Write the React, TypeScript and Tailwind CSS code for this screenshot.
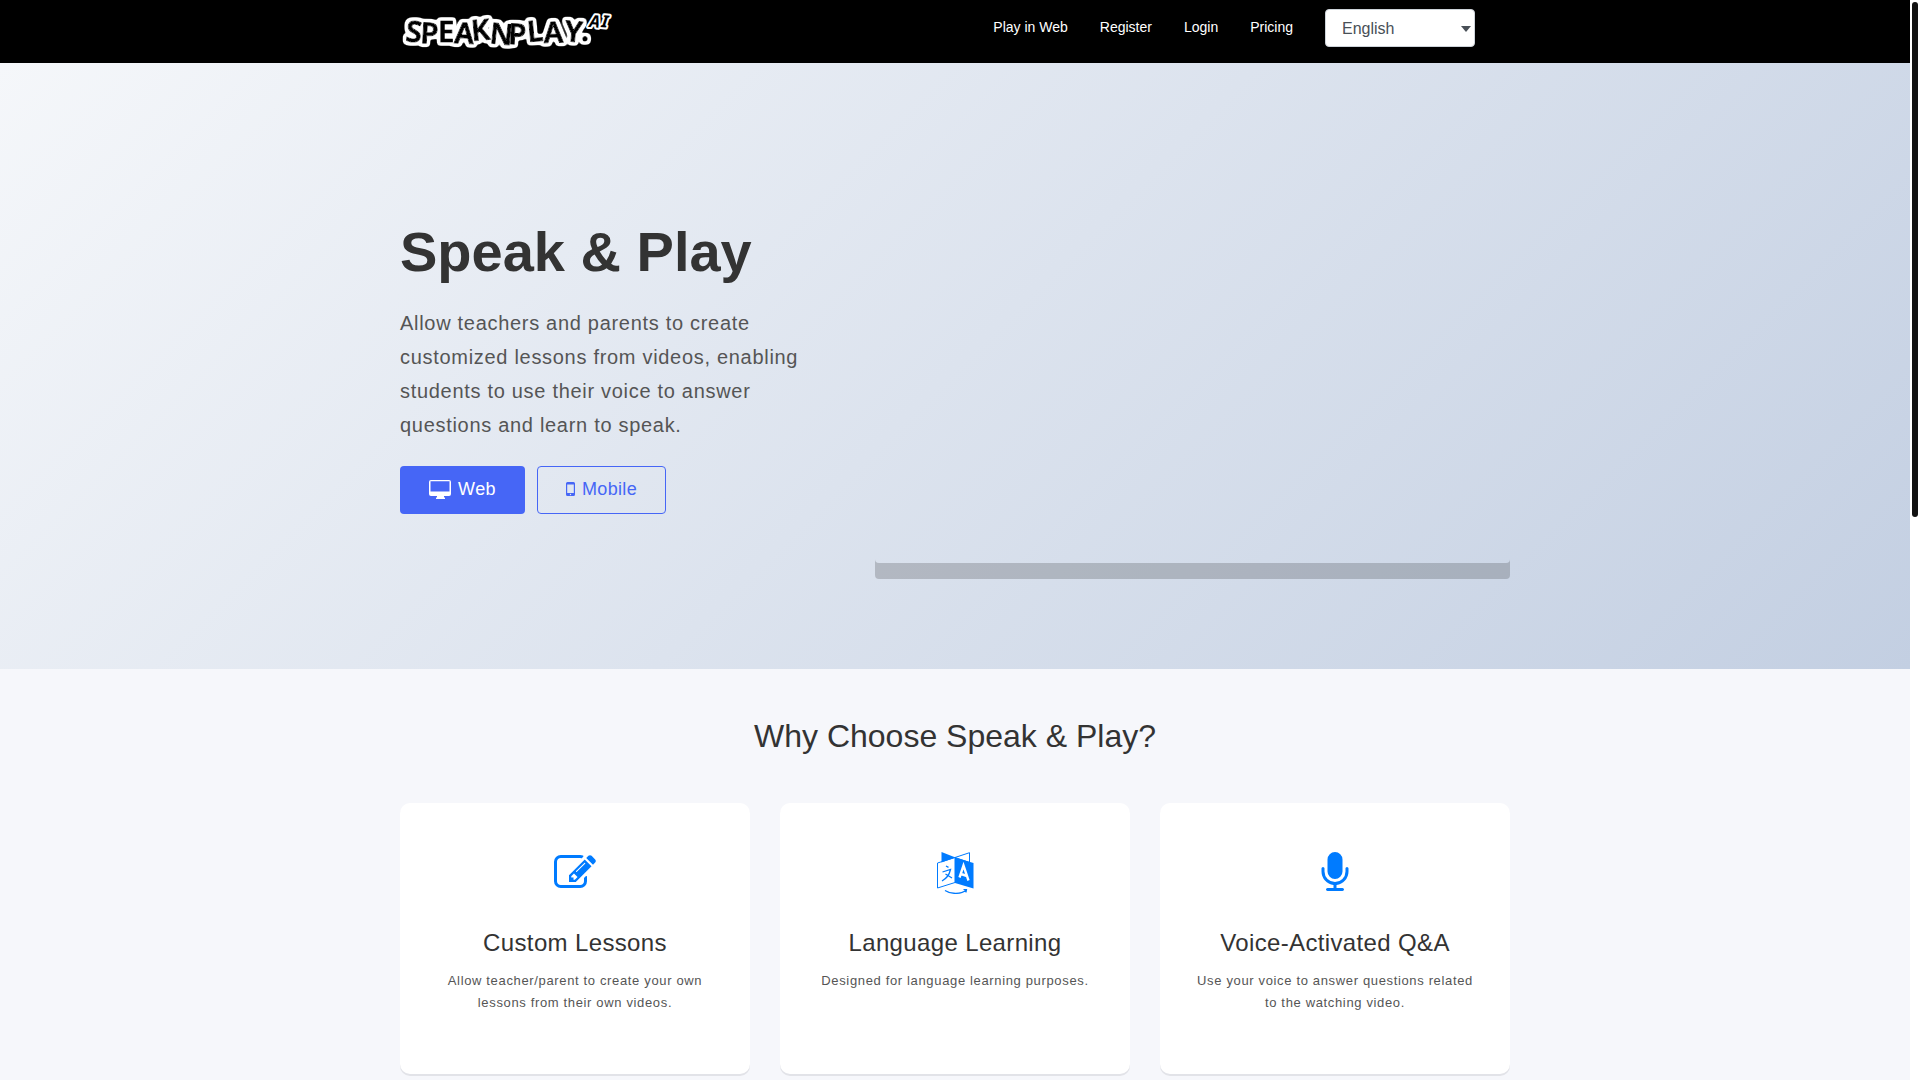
import * as React from 'react';

interface Feature {
  title: string;
  description: string;
  icon: React.ReactNode;
}

const NAV_LINKS = ['Play in Web', 'Register', 'Login', 'Pricing'];

const LANGUAGES = ['English', 'Español', 'Français', '中文'];

const Logo = () => {
  return (
    <svg viewBox="0 0 220 48" className="w-[220px] h-[48px]" role="img" aria-label="SpeakNPlay.AI">
      {/* 文字の外側に丸みのある白フチをつける */}
      <filter id="logo-outline" x="-10%" y="-30%" width="120%" height="160%">
        <feMorphology in="SourceAlpha" operator="dilate" radius="2" />
        <feGaussianBlur stdDeviation="1.5" />
        <feComponentTransfer result="outline">
          <feFuncR type="linear" slope="0" intercept="1" />
          <feFuncG type="linear" slope="0" intercept="1" />
          <feFuncB type="linear" slope="0" intercept="1" />
          <feFuncA type="linear" slope="5" intercept="-0.5" />
        </feComponentTransfer>
        <feMerge>
          <feMergeNode in="outline" />
          <feMergeNode in="SourceGraphic" />
        </feMerge>
      </filter>
      <g
        fill="#000"
        stroke="#000"
        strokeLinejoin="round"
        fontFamily="'Liberation Sans Narrow', 'Noto Sans', sans-serif"
        fontWeight="600"
        filter="url(#logo-outline)"
      >
        <text
          fontSize="29"
          strokeWidth="1"
          x="5 20 38 54 72 89 108 128 144 164 181"
          y="36 38 37 38 36 38 39 37 38 36 36"
          rotate="6 3 0 3 -5 6 2 -5 -2 5 0"
        >
          SPEAKNPLAY.
        </text>
      </g>
      <g
        fill="#000"
        stroke="#fff"
        strokeLinejoin="round"
        paintOrder="stroke"
        fontFamily="'Noto Sans', sans-serif"
        fontWeight="bold"
        fontStyle="italic"
      >
        <text fontSize="17" strokeWidth="4" x="189 201" y="22 22" rotate="4 6">AI</text>
      </g>
    </svg>
  );
};

const DesktopIcon = () => {
  return (
    <svg viewBox="0 0 22 19" className="w-[22px] h-[19px]" fill="currentColor" aria-hidden="true">
      <path
        fillRule="evenodd"
        d="M2 0h18a2 2 0 0 1 2 2v12a2 2 0 0 1-2 2h-5v1l1 1v1H7v-1l1-1v-1H2a2 2 0 0 1-2-2V2a2 2 0 0 1 2-2zm-.5 1.200v10.300h19V1.200z"
      />
    </svg>
  );
};

const PhoneIcon = () => {
  return (
    <svg viewBox="0 0 9 14" className="w-[9px] h-[14px]" fill="currentColor" aria-hidden="true">
      <path
        fillRule="evenodd"
        d="M1.500 0h6A1.500 1.500 0 0 1 9 1.500v11A1.500 1.500 0 0 1 7.500 14h-6A1.500 1.500 0 0 1 0 12.500v-11A1.500 1.500 0 0 1 1.500 0zM1.200 2.600v8.400h6.600V2.600zM4.500 11.800a.7.7 0 1 0 0 1.400.7.7 0 0 0 0-1.400z"
      />
    </svg>
  );
};

const EditIcon = () => {
  return (
    <svg viewBox="0 0 1792 1792" className="w-[42px] h-[42px]" fill="currentColor" aria-hidden="true">
      <path d="M888 1184l116-116-152-152-116 116v56h96v96h56zm440-720q-16-16-33 1l-350 350q-17 17-1 33t33-1l350-350q17-17 1-33zm80 594v190q0 119-84.500 203.500t-203.500 84.500h-832q-119 0-203.500-84.500t-84.500-203.500v-832q0-119 84.500-203.500t203.500-84.500h832q63 0 117 25 15 7 18 23 3 17-9 29l-49 49q-14 14-32 8-23-6-45-6h-832q-66 0-113 47t-47 113v832q0 66 47 113t113 47h832q66 0 113-47t47-113v-126q0-13 9-22l64-64q15-15 35-7t20 29zm-96-738l288 288-672 672h-288v-288zm444 132l-92 92-288-288 92-92q28-28 68-28t68 28l152 152q28 28 28 68t-28 68z" />
    </svg>
  );
};

const LanguageIcon = () => {
  return (
    <svg viewBox="0 0 42 42" className="w-[42px] h-[42px]" fill="none" stroke="currentColor" strokeWidth="1" aria-hidden="true">
      {/* 奥のページ */}
      <path d="M7.500 0l14 5.500-14 5z" fill="currentColor" stroke="none" />
      <path d="M21 5.500L35.500 .7v10.500M21 5.500l14.500 5" />
      {/* 手前のページ */}
      <path d="M3.500 11L21 5.500v25L3.500 36z" />
      <path d="M21 5.500l18.500 5.500v25.500L21 31z" fill="currentColor" stroke="none" />
      <path d="M12 14l2.500 1.300M8.500 20l8-2.500c-1 4.500-4 9-8.500 11.500M11.500 22l6.500 4" strokeWidth="1.300" />
      <path d="M25.500 25.500l4-12 5 15M27 22l6 2" stroke="#fff" strokeWidth="2.400" />
      <path d="M11 38.500c6 4 16 4 21-.5M29.500 37.500l3 0-.5 3" strokeWidth="1.200" />
    </svg>
  );
};

const MicrophoneIcon = () => {
  return (
    <svg viewBox="0 0 1792 1792" className="w-[42px] h-[42px]" fill="currentColor" aria-hidden="true">
      <path d="M1472 704v128q0 221-147.500 384.500t-364.500 187.500v132h256q26 0 45 19t19 45-19 45-45 19h-640q-26 0-45-19t-19-45 19-45 45-19h256v-132q-217-24-364.500-187.500t-147.500-384.500v-128q0-26 19-45t45-19 45 19 19 45v128q0 185 131.500 316.500t316.500 131.500 316.500-131.500 131.500-316.500v-128q0-26 19-45t45-19 45 19 19 45zm-256-384v512q0 132-94 226t-226 94-226-94-94-226v-512q0-132 94-226t226-94 226 94 94 226z" />
    </svg>
  );
};

const FEATURES: Feature[] = [
  {
    title: 'Custom Lessons',
    description: 'Allow teacher/parent to create your own lessons from their own videos.',
    icon: <EditIcon />,
  },
  {
    title: 'Language Learning',
    description: 'Designed for language learning purposes.',
    icon: <LanguageIcon />,
  },
  {
    title: 'Voice-Activated Q&A',
    description: 'Use your voice to answer questions related to the watching video.',
    icon: <MicrophoneIcon />,
  },
];

const Container = ({ children, className }: {
  children?: React.ReactNode
  className?: string
}) => {
  return (
    <div className={`w-full max-w-[1140px] mx-auto px-[15px] ${className ?? ''}`}>
      {children}
    </div>
  );
};

const Header = () => {
  const [language, setLanguage] = React.useState(LANGUAGES[0]);

  return (
    <header className="bg-black">
      <Container className="flex items-start justify-between h-[63px] pt-[9px]">
        <a href="#" className="-mt-1"><Logo /></a>
        <nav className="flex items-center gap-8 pr-[35px]">
          {NAV_LINKS.map(label => (
            <a key={label} href="#" className="text-sm leading-5 pb-0.5 text-white">{label}</a>
          ))}
          <div className="relative">
            <select
              aria-label="Language"
              value={language}
              onChange={e => setLanguage(e.target.value)}
              className="block appearance-none w-[150px] h-[38px] pt-0.5 pl-4 pr-6 rounded border border-[#ced4da] bg-white text-base text-[#495057]"
            >
              {LANGUAGES.map(x => <option key={x} value={x}>{x}</option>)}
            </select>
            <svg viewBox="0 0 10 6" className="absolute right-1 top-[17px] w-[10px] h-[6px] pointer-events-none" fill="#495057">
              <path d="M0 0h10L5 6z" />
            </svg>
          </div>
        </nav>
      </Container>
    </header>
  );
};

const Hero = () => {
  return (
    <section className="bg-linear-[135deg,#f5f7fa_0%,#c3cfe2_100%] pt-[143px] pb-[106px]">
      <Container className="grid grid-cols-12 gap-[30px]">
        <div className="col-span-5 pt-3">
          <h1 className="text-[56px] leading-[68px] font-bold text-[#333]">Speak &amp; Play</h1>
          <p className="mt-5 text-xl leading-[34px] tracking-[0.035em] text-[#555]">
            Allow teachers and parents to create customized lessons from videos, enabling students to use their voice to answer questions and learn to speak.
          </p>
          <div className="flex gap-3 mt-6">
            <button type="button" className="flex items-center justify-center gap-[7px] w-[125px] h-12 pb-0.5 rounded bg-[#4666f6] text-lg tracking-[0.02em] text-white">
              <DesktopIcon />Web
            </button>
            <button type="button" className="flex items-center justify-center gap-[7px] w-[129px] h-12 pb-0.5 rounded border border-[#4666f6] text-lg tracking-[0.02em] text-[#4666f6]">
              <PhoneIcon />Mobile
            </button>
          </div>
        </div>
        <div className="col-span-7 aspect-video rounded shadow-[0_16px_0_rgba(0,0,0,0.18)]"></div>
      </Container>
    </section>
  );
};

const FeatureCard = ({ feature }: { feature: Feature }) => {
  return (
    <article className="flex flex-col items-center h-[271px] px-[30px] pt-[49px] rounded-[10px] bg-white text-center shadow-[0_2px_0_#e2e3e8]">
      <div className="text-[#007bff]">{feature.icon}</div>
      <h3 className="mt-[33px] text-2xl leading-8 tracking-[0.015em] text-[#333]">{feature.title}</h3>
      <p className="mt-[11px] text-[13px] leading-[22px] tracking-wider text-[#555]">{feature.description}</p>
    </article>
  );
};

const Features = () => {
  return (
    <section className="pt-12">
      <Container>
        <h2 className="text-[32px] leading-[38px] text-center text-[#333]">Why Choose Speak &amp; Play?</h2>
        <div className="grid grid-cols-3 gap-[30px] mt-12">
          {FEATURES.map(x => <FeatureCard key={x.title} feature={x} />)}
        </div>
      </Container>
    </section>
  );
};

export default function App() {
  return (
    <div className="flex min-h-screen bg-white font-['Liberation_Sans',sans-serif]">
      <main className="flex-1 bg-[#f6f7fb]">
        <Header />
        <Hero />
        <Features />
      </main>
      <div className="w-[10px] pt-0.5 pl-0.5" aria-hidden="true">
        <div className="w-1.5 h-[515px] rounded-full bg-[#111]"></div>
      </div>
    </div>
  );
}
